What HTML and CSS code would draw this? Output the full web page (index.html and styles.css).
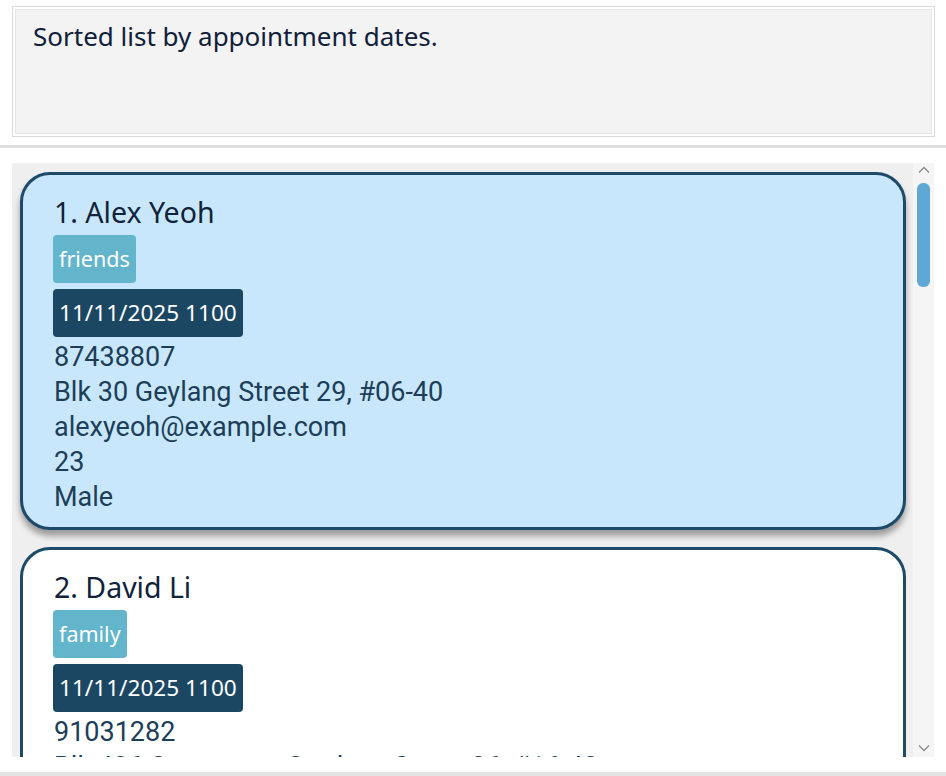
FILE: index.html
```html
<!DOCTYPE html>
<html>
<head>
<meta charset="utf-8">
<link rel="stylesheet" href="styles.css">
</head>
<body>
<div class="result-outer">
  <div class="result-inner">Sorted list by appointment dates.</div>
</div>
<div class="separator"></div>
<div class="list-wrap">
  <div class="list">
    <div class="card selected">
      <div class="name">1. Alex Yeoh</div>
      <div class="tags"><span class="tag">friends</span></div>
      <div class="tags dates"><span class="date">11/11/2025 1100</span></div>
      <div class="detail">87438807</div>
      <div class="detail">Blk 30 Geylang Street 29, #06-40</div>
      <div class="detail">alexyeoh@example.com</div>
      <div class="detail">23</div>
      <div class="detail">Male</div>
    </div>
    <div class="card">
      <div class="name">2. David Li</div>
      <div class="tags"><span class="tag">family</span></div>
      <div class="tags dates"><span class="date">11/11/2025 1100</span></div>
      <div class="detail">91031282</div>
      <div class="detail">Blk 436 Serangoon Gardens Street 26, #16-43</div>
      <div class="detail">lidavid@example.com</div>
      <div class="detail">38</div>
      <div class="detail">Male</div>
    </div>
  </div>
  <div class="scrollbar">
    <svg class="arrow" width="12" height="8" viewBox="0 0 12 8"><path d="M1 6.5 L6 1.5 L11 6.5" fill="none" stroke="#8a8a8a" stroke-width="1.3"/></svg>
    <div class="track"><div class="thumb"></div></div>
    <svg class="arrow" width="12" height="8" viewBox="0 0 12 8"><path d="M1 1.5 L6 6.5 L11 1.5" fill="none" stroke="#8a8a8a" stroke-width="1.3"/></svg>
  </div>
</div>
<div class="bottom-line"></div>
</body>
</html>
```

FILE: styles.css
```css
html, body {
  margin: 0;
  padding: 0;
  background: #ffffff;
  overflow: hidden;
}
body {
  width: 946px;
  height: 776px;
  font-family: "Noto Sans", "Open Sans", sans-serif;
}
.result-outer {
  margin: 6px 11px 0 12px;
  height: 131px;
  box-sizing: border-box;
  border: 1px solid #dadada;
  padding: 2px;
  background: #ffffff;
}
.result-inner {
  height: 100%;
  box-sizing: border-box;
  background: #f3f3f3;
  border: 1px solid #e6e6e6;
  padding: 10px 0 0 17px;
  font-size: 26px;
  line-height: 32px;
  color: #10203a;
}
.separator {
  margin-top: 8px;
  height: 3px;
  background: #dedede;
}
.list-wrap {
  margin: 15px 12px 0 12px;
  height: 594px;
  display: flex;
  background: #efefef;
}
.list {
  flex: 1;
  overflow: hidden;
  padding: 9px 7px 0 8px;
}
.card {
  position: relative;
  box-sizing: border-box;
  border: 3px solid #1d4a68;
  border-radius: 30px;
  background: #ffffff;
  padding: 14px 20px 12px 30px;
  margin-bottom: 17px;
  color: #1c3e58;
}
.card.selected {
  background: #c9e7fc;
  box-shadow: 0 6px 6px rgba(0, 0, 0, 0.35);
}
.name {
  font-size: 28.5px;
  line-height: 46px;
  padding-left: 1px;
  color: #10233b;
}
.tags {
  display: flex;
  margin-bottom: 6px;
}
.tags.dates {
  margin-bottom: 3px;
}
.tag, .date {
  display: inline-block;
  height: 48px;
  line-height: 48px;
  padding: 0 6px;
  border-radius: 4px;
  color: #ffffff;
  font-size: 21.5px;
}
.date {
  font-size: 22.6px;
}
.tag {
  background: #62b5cb;
}
.date {
  background: #1c4763;
}
.detail {
  font-family: Roboto, "Noto Sans", sans-serif;
  font-size: 27px;
  line-height: 35px;
  padding-left: 1px;
  color: #1c3e58;
}
.scrollbar {
  width: 21px;
  background: #f5f5f5;
  display: flex;
  flex-direction: column;
  align-items: center;
}
.arrow {
  margin-top: 3px;
  flex: none;
}
.track {
  flex: 1;
  width: 100%;
  display: flex;
  justify-content: center;
  padding-top: 9px;
}
.thumb {
  width: 13px;
  height: 104px;
  border-radius: 6px;
  background: #5fa8d6;
}
.scrollbar .arrow:last-child {
  margin: 0 0 5px 0;
}
.bottom-line {
  margin-top: 15px;
  height: 4px;
  background: #e3e3e3;
}
```
